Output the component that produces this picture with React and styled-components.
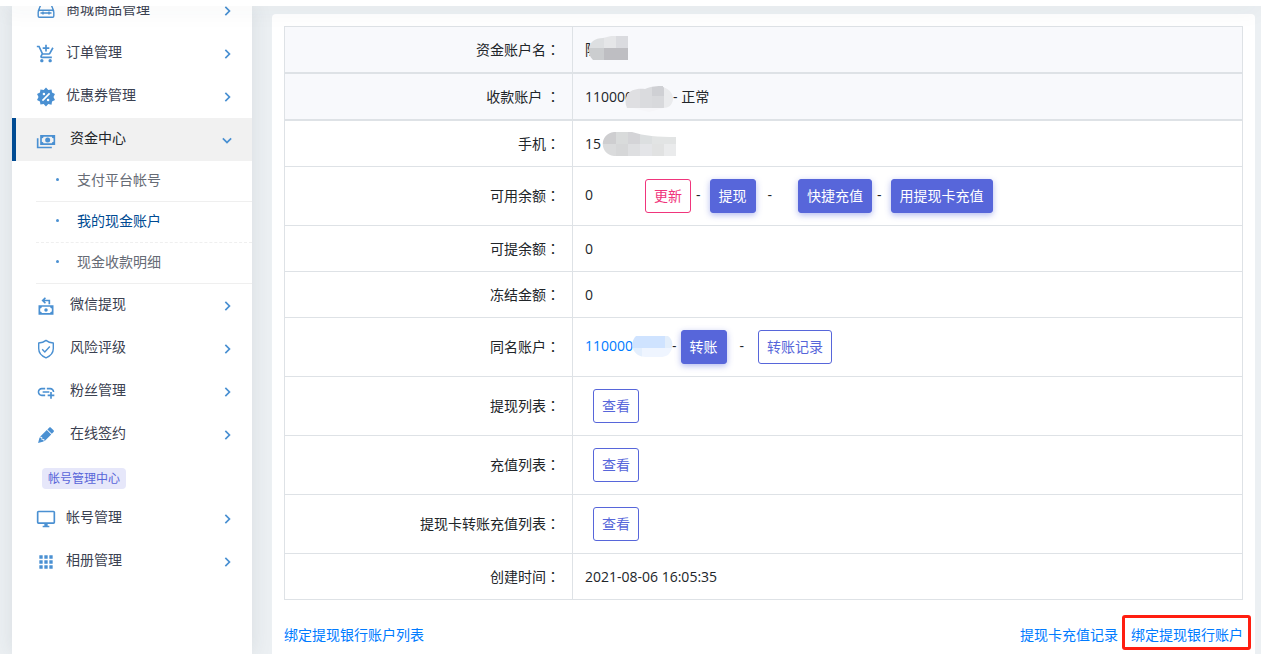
import React from 'react'
import styled, { createGlobalStyle } from 'styled-components'
import { BiChevronRight, BiChevronDown } from 'react-icons/bi'
import { MdAddLink, MdOutlineAddShoppingCart, MdApps } from 'react-icons/md'

const GlobalStyle = createGlobalStyle`
  * {
    box-sizing: border-box;
  }
  body {
    margin: 0;
    background-color: #ecf0f3;
    color: #212529;
    font-family: 'Open Sans', 'Noto Sans CJK SC', sans-serif;
    font-size: 14px;
    font-weight: 400;
    line-height: 21px;
  }
`

const TopBar = styled.header`
  position: relative;
  z-index: 2;
  height: 6px;
  background-color: #fff;
  box-shadow: 0 0 24px rgba(50, 60, 65, 0.12);
`

const Layout = styled.div`
  display: flex;
  min-height: calc(100vh - 6px);
  padding: 0 6px 0 12px;
`

const Sidebar = styled.nav`
  flex: 0 0 240px;
  background-color: #fff;
  box-shadow: 0 0 20px rgba(50, 60, 65, 0.1);
`

const MenuClip = styled.div`
  overflow: hidden;
`

const Menu = styled.ul`
  list-style: none;
  margin: -17px 0 0;
  padding: 0;
`

const MenuLink = styled.a`
  display: flex;
  align-items: center;
  height: 43px;
  padding: 0 15px 0 20px;
  border-left: 4px solid ${(p) => (p.$active ? '#004b93' : 'transparent')};
  background-color: ${(p) => (p.$active ? '#f1f1f1' : 'transparent')};
  color: ${(p) => (p.$active ? '#212529' : '#3b4151')};
  text-decoration: none;
`

const MenuIcon = styled.span`
  display: flex;
  flex: none;
  width: 20px;
  justify-content: center;
  margin-right: ${(p) => (p.$wide ? '14px' : '10px')};
  color: #4a90d2;
  font-size: 20px;
`

const MenuText = styled.span`
  flex: 1;
  padding-bottom: 5px;
`

const Arrow = styled.span`
  display: flex;
  color: #4a90d2;
  font-size: 20px;
`

const SubMenu = styled.ul`
  list-style: none;
  margin: 0;
  padding: 0 0 0 24px;
`

const SubItem = styled.li`
  border-bottom: 1px ${(p) => (p.$active ? 'dashed' : 'solid')} #efefef;
`

const SubLink = styled.a`
  display: flex;
  align-items: center;
  height: 40px;
  padding: 0 0 4px 20px;
  color: ${(p) => (p.$active ? '#004b93' : '#666b75')};
  text-decoration: none;

  &::before {
    content: '';
    width: 3px;
    height: 3px;
    margin-right: 18px;
    border-radius: 50%;
    background-color: #4a90d2;
  }
`

const GroupTag = styled.span`
  display: inline-block;
  margin: 12px 0 8px 30px;
  padding: 1px 6px 0;
  border-radius: 4px;
  background-color: #e6e7fa;
  color: #5865d9;
  font-size: 12px;
  line-height: 20px;
  vertical-align: top;
`

const Card = styled.main`
  flex: 1;
  margin: 8px 0 0 20px;
  padding: 12px 12px 0;
  border-radius: 4px 4px 0 0;
  background-color: #fff;
`

const InfoTable = styled.table`
  width: 100%;
  border-collapse: collapse;
  border: 1px solid #dee2e6;
`

const Row = styled.tr`
  background-color: ${(p) => (p.$head ? '#f8f9fc' : 'transparent')};

  th,
  td {
    border: 1px solid #dee2e6;
    border-bottom-width: ${(p) => (p.$head ? '2px' : '1px')};
    padding: 12px;
    vertical-align: middle;
  }

  th {
    padding-bottom: ${(p) => (p.$actions ? '14px' : '12px')};
  }
`

const Label = styled.th`
  width: 288px;
  font-weight: 400;
  text-align: right;
`

const Colon = styled.span`
  font-family: 'Noto Sans CJK TC', sans-serif;
`

const Line = styled.div`
  display: flex;
  align-items: flex-start;
  line-height: ${(p) => (p.$actions ? '31px' : '21px')};
  white-space: pre;
`

const Spacer = styled.span`
  flex: none;
  width: ${(p) => p.$w}px;
`

const Button = styled.button`
  height: 34px;
  padding: 0 8px 2px;
  border: 1px solid ${(p) => (p.$danger ? '#f0357c' : '#5766da')};
  border-radius: 3px;
  background-color: ${(p) => (p.$solid ? '#5766da' : '#fff')};
  box-shadow: ${(p) => (p.$solid ? '0 2px 6px rgba(87, 102, 218, 0.45)' : 'none')};
  color: ${(p) => (p.$solid ? '#fff' : p.$danger ? '#f0357c' : '#5766da')};
  font: inherit;
  line-height: 21px;
  cursor: pointer;
`

const Link = styled.a`
  color: #007bff;
  text-decoration: none;
`

const Hidden = styled.span`
  position: relative;
  display: inline-block;
  width: ${(p) => p.$w}px;

  svg {
    position: absolute;
    top: ${(p) => p.$top}px;
    left: ${(p) => p.$from}px;
  }
`

const Footer = styled.footer`
  display: flex;
  justify-content: space-between;
  margin-top: 24px;
`

const FooterLinks = styled.div`
  display: flex;
  gap: 13px;
`

const MarkedLink = styled(Link)`
  position: relative;

  &::after {
    content: '';
    position: absolute;
    inset: -9px -8px -5px -9px;
    border: 3px solid #ff1e10;
    border-radius: 3px;
  }
`

const Glyph = ({ d }) => (
  <svg width="20" height="20" viewBox="0 0 24 24" fill="currentColor" aria-hidden="true">
    <path d={d} />
  </svg>
)

const LineGlyph = ({ d }) => (
  <svg
    width="20"
    height="20"
    viewBox="0 0 20 20"
    fill="none"
    stroke="currentColor"
    strokeWidth="1.4"
    strokeLinejoin="round"
    aria-hidden="true"
  >
    <path d={d} />
  </svg>
)

const icons = {
  goods: 'M2.2 10.2 4.6 4.2H15.4L17.8 10.2M4 9.2H16A1.8 1.8 0 0 1 17.8 11V15A1.2 1.2 0 0 1 16.6 16.2H3.4A1.2 1.2 0 0 1 2.2 15V11A1.8 1.8 0 0 1 4 9.2ZM4.5 12H15.5M7 10.4V13.6M13 10.4V13.6',
  sale: 'M18.65 2.85 19.26 6.71 22.77 8.5 21 12 22.78 15.5 19.24 17.29 18.63 21.15 14.74 20.54 11.97 23.3 9.19 20.5 5.33 21.14 4.71 17.25 1.22 15.47 3 11.97 1.23 8.5 4.74 6.69 5.35 2.86 9.22 3.5 12 .69 14.77 3.46 18.65 2.85M9.5 7A1.5 1.5 0 0 0 8 8.5 1.5 1.5 0 0 0 9.5 10 1.5 1.5 0 0 0 11 8.5 1.5 1.5 0 0 0 9.5 7M14.5 14A1.5 1.5 0 0 0 13 15.5 1.5 1.5 0 0 0 14.5 17 1.5 1.5 0 0 0 16 15.5 1.5 1.5 0 0 0 14.5 14M8.41 17 17 8.41 15.59 7 7 15.59 8.41 17Z',
  cash: 'M5 6H23V18H5V6M14 9A3 3 0 0 1 17 12 3 3 0 0 1 14 15 3 3 0 0 1 11 12 3 3 0 0 1 14 9M9 8A2 2 0 0 1 7 10V14A2 2 0 0 1 9 16H19A2 2 0 0 1 21 14V10A2 2 0 0 1 19 8H9M1 10H3V20H19V22H1V10Z',
  withdraw: 'M3 11H21V22.5H3V11M7 13A2 2 0 0 1 5 15V18.5A2 2 0 0 1 7 20.5H17A2 2 0 0 1 19 18.5V15A2 2 0 0 1 17 13H7M12 14.6A2.1 2.1 0 0 1 14.1 16.7 2.1 2.1 0 0 1 12 18.8 2.1 2.1 0 0 1 9.9 16.7 2.1 2.1 0 0 1 12 14.6M10.6 1.4 12 2.8 10.4 4.4H17V10H15V6.4H10.4L12 8 10.6 9.4 6.6 5.4Z',
  shield: 'M10 1.4C12 3 14.5 3.8 17.3 4V9.5C17.3 13.8 14.5 17 10 18.8C5.5 17 2.7 13.8 2.7 9.5V4C5.5 3.8 8 3 10 1.4ZM6.2 10.3 8.8 12.9 13.8 7.6',
  pencil: 'M16.84 2.73C16.45 2.73 16.07 2.88 15.77 3.17L13.65 5.29 18.95 10.6 21.07 8.5C21.67 7.89 21.67 6.94 21.07 6.36L17.9 3.17C17.6 2.88 17.22 2.73 16.84 2.73M12.94 6 4.84 14.11 7.4 14.39 7.58 16.68 9.86 16.85 10.15 19.41 18.25 11.3M4.25 15.04 2.5 21.73 9.2 19.94 8.96 17.78 6.65 17.61 6.47 15.29',
  monitor: 'M21 16H3V4H21M21 2H3C1.89 2 1 2.89 1 4V16A2 2 0 0 0 3 18H10V20H8V22H16V20H14V18H21A2 2 0 0 0 23 16V4C23 2.89 22.1 2 21 2Z',
}

// grey mosaic tiles covering part of a value
const Mosaic = ({ id, shape, tiles, width, height }) => (
  <svg width={width} height={height} viewBox={`0 0 ${width} ${height}`} aria-hidden="true">
    <clipPath id={id}>
      <path d={shape} />
    </clipPath>
    <g clipPath={`url(#${id})`}>
      {tiles.map(([x, y, w, h, fill]) => (
        <rect key={`${x}-${y}`} x={x} y={y} width={w} height={h} fill={fill} />
      ))}
    </g>
  </svg>
)

const NameMosaic = () => (
  <Mosaic
    id="mask-name"
    width={39}
    height={24}
    shape="M0 14C0 6 6 2 14 2L22 0H39V24H4C1 21 0 18 0 14Z"
    tiles={[
      [0, 0, 15, 12, '#dddfe1'],
      [15, 0, 12, 12, '#e5e6e8'],
      [27, 0, 12, 12, '#dadbdf'],
      [0, 12, 15, 12, '#cbcdcf'],
      [15, 12, 24, 12, '#bebec2'],
    ]}
  />
)

const AccountMosaic = () => (
  <Mosaic
    id="mask-account"
    width={49}
    height={26}
    shape="M2 9C5 4 12 2 20 3C27 0 32 0 38 0V1C45 3 49 9 48 14C47 19 44 22 38 22L24 26L8 22H2C0 18 0 13 2 9Z"
    tiles={[
      [0, 0, 15, 22, '#dfdfe2'],
      [15, 0, 12, 22, '#dadbde'],
      [27, 0, 12, 10, '#cfd0d4'],
      [27, 10, 12, 12, '#d8d9dc'],
      [39, 0, 10, 22, '#eaebed'],
      [0, 22, 49, 4, '#f6f6f9'],
    ]}
  />
)

const PhoneMosaic = () => (
  <Mosaic
    id="mask-phone"
    width={76}
    height={28}
    shape="M12 0H30C42 4 56 5 74 5V24H12C-3 22 -3 2 12 0Z"
    tiles={[
      [0, 0, 14, 12, '#ceced0'],
      [14, 0, 12, 12, '#d9dbdb'],
      [26, 0, 12, 12, '#d4d4d7'],
      [38, 0, 12, 12, '#dcdfe0'],
      [50, 0, 24, 12, '#e2e4e4'],
      [0, 12, 14, 12, '#dadbdc'],
      [14, 12, 12, 12, '#d6d7d8'],
      [26, 12, 12, 12, '#dedfe1'],
      [38, 12, 12, 12, '#e4e5e8'],
      [50, 12, 12, 12, '#e1e2e2'],
      [62, 12, 12, 12, '#eaebec'],
    ]}
  />
)

const LinkMosaic = () => (
  <Mosaic
    id="mask-link"
    width={41}
    height={21}
    shape="M4 0H36C40 3 41 7 40 12C38 19 34 21 28 21H14C8 21 3 18 1 13C-1 8 1 3 4 0Z"
    tiles={[
      [0, 0, 33, 12, '#cfe3ff'],
      [33, 0, 8, 12, '#e3eefb'],
      [0, 12, 10, 9, '#e4effd'],
      [10, 12, 31, 9, '#eff5ff'],
    ]}
  />
)

const fundItems = ['支付平台帐号', '我的现金账户', '现金收款明细']

function MenuItem({ icon, text, wide, active }) {
  return (
    <MenuLink href="#" $active={active}>
      <MenuIcon $wide={wide}>{icon}</MenuIcon>
      <MenuText>{text}</MenuText>
      <Arrow>{active ? <BiChevronDown /> : <BiChevronRight />}</Arrow>
    </MenuLink>
  )
}

function InfoRow({ label, head, actions, children }) {
  return (
    <Row $head={head} $actions={actions}>
      <Label scope="row">
        {label}
        <Colon>：</Colon>
      </Label>
      <td>
        <Line $actions={actions}>{children}</Line>
      </td>
    </Row>
  )
}

function App() {
  return (
    <>
      <GlobalStyle />
      <TopBar />
      <Layout>
        <Sidebar>
          <MenuClip>
            <Menu>
              <li><MenuItem icon={<LineGlyph d={icons.goods} />} text="商城商品管理" /></li>
              <li><MenuItem icon={<MdOutlineAddShoppingCart />} text="订单管理" /></li>
              <li><MenuItem icon={<Glyph d={icons.sale} />} text="优惠券管理" /></li>
              <li>
                <MenuItem icon={<Glyph d={icons.cash} />} text="资金中心" wide active />
                <SubMenu>
                  {fundItems.map((name) => (
                    <SubItem key={name} $active={name === '我的现金账户'}>
                      <SubLink href="#" $active={name === '我的现金账户'}>{name}</SubLink>
                    </SubItem>
                  ))}
                </SubMenu>
              </li>
              <li><MenuItem icon={<Glyph d={icons.withdraw} />} text="微信提现" wide /></li>
              <li><MenuItem icon={<LineGlyph d={icons.shield} />} text="风险评级" wide /></li>
              <li><MenuItem icon={<MdAddLink />} text="粉丝管理" wide /></li>
              <li><MenuItem icon={<Glyph d={icons.pencil} />} text="在线签约" wide /></li>
              <li><GroupTag>帐号管理中心</GroupTag></li>
              <li><MenuItem icon={<Glyph d={icons.monitor} />} text="帐号管理" /></li>
              <li><MenuItem icon={<MdApps />} text="相册管理" /></li>
            </Menu>
          </MenuClip>
        </Sidebar>

        <Card>
          <InfoTable>
            <tbody>
              <InfoRow label="资金账户名" head>
                <Hidden $w={44} $from={4} $top={-3}>陈<NameMosaic /></Hidden>
              </InfoRow>
              <InfoRow label="收款账户 " head>
                <Hidden $w={88} $from={40} $top={0}>110000<AccountMosaic /></Hidden>- 正常
              </InfoRow>
              <InfoRow label="手机">
                <Hidden $w={92} $from={17} $top={-1}>15<PhoneMosaic /></Hidden>
              </InfoRow>
              <InfoRow label="可用余额" actions>
                0
                <Spacer $w={52} />
                <Button type="button" $danger>更新</Button>
                <Spacer $w={5} />-<Spacer $w={9} />
                <Button type="button" $solid>提现</Button>
                <Spacer $w={12} />-<Spacer $w={26} />
                <Button type="button" $solid>快捷充值</Button>
                <Spacer $w={5} />-<Spacer $w={9} />
                <Button type="button" $solid>用提现卡充值</Button>
              </InfoRow>
              <InfoRow label="可提余额">0</InfoRow>
              <InfoRow label="冻结金额">0</InfoRow>
              <InfoRow label="同名账户" actions>
                <Link href="#">
                  <Hidden $w={87} $from={47} $top={6}>110000<LinkMosaic /></Hidden>
                </Link>
                -<Spacer $w={4} />
                <Button type="button" $solid>转账</Button>
                <Spacer $w={13} />-<Spacer $w={14} />
                <Button type="button">转账记录</Button>
              </InfoRow>
              <InfoRow label="提现列表" actions>
                <Spacer $w={8} />
                <Button type="button">查看</Button>
              </InfoRow>
              <InfoRow label="充值列表" actions>
                <Spacer $w={8} />
                <Button type="button">查看</Button>
              </InfoRow>
              <InfoRow label="提现卡转账充值列表" actions>
                <Spacer $w={8} />
                <Button type="button">查看</Button>
              </InfoRow>
              <InfoRow label="创建时间">2021-08-06 16:05:35</InfoRow>
            </tbody>
          </InfoTable>
          <Footer>
            <Link href="#">绑定提现银行账户列表</Link>
            <FooterLinks>
              <Link href="#">提现卡充值记录</Link>
              <MarkedLink href="#">绑定提现银行账户</MarkedLink>
            </FooterLinks>
          </Footer>
        </Card>
      </Layout>
    </>
  )
}

export default App
